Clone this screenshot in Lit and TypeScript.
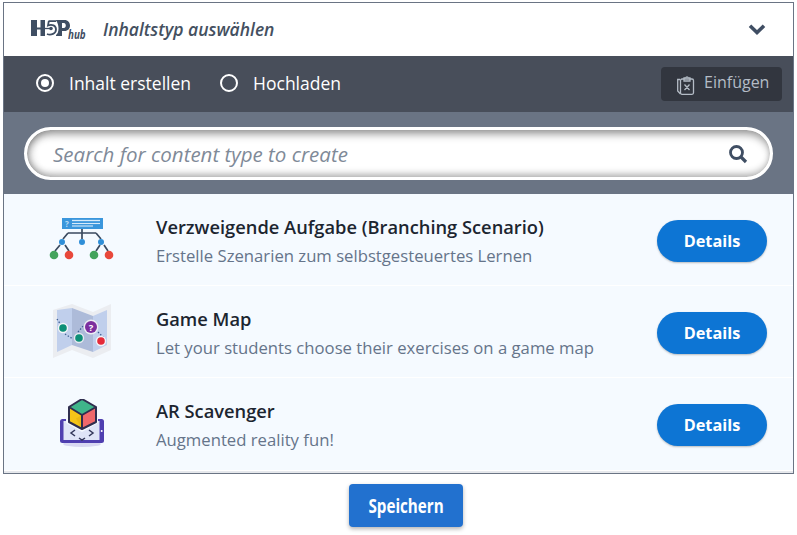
import { LitElement, html, css } from "lit";
import { customElement } from "lit/decorators.js";

const logo = html`<svg class="logo" width="44" height="18" viewBox="31 19 44 18" aria-hidden="true">
  <path fill="#3f4e63" d="M31 20h6v7.500h3.500V20H45v16h-4.500v-6.500H37V36h-6z"/>
  <path d="M44 28.500h6" stroke="#3f4e63" stroke-width="1.300"/>
  <circle cx="51" cy="28.500" r="1.800" fill="#3f4e63"/>
  <path fill="none" stroke="#3f4e63" stroke-width="1.800" d="M48.500 21.200h7.500M48.800 21.200l-.8 4.300c4-1.500 8 0 8 4s-5 6.200-9 4.500"/>
  <path fill="#3f4e63" fill-rule="evenodd" d="M56 20h8.500c3.500 0 5.500 2.500 5.500 5.500s-2 5.500-5.500 5.500H62v5h-6v-1c1.500-1 2.500-3 2.500-6.500 0-3.500-1-6-2.500-8zm6 3v5h2c1 0 1.800-1 1.800-2.500s-.8-2.500-1.800-2.500z"/>
</svg>`;

const branching = html`<svg class="ic" width="72" height="50" viewBox="44 216 72 50" aria-hidden="true">
  <rect x="62" y="218" width="41" height="11" fill="#3a96dc"/>
  <text x="65" y="227" font-size="8" font-family="Open Sans" font-weight="700" fill="#bcdcf5">?</text>
  <path d="M72 220.500h28" stroke="#d8ebfa" stroke-width="1.300"/>
  <path d="M72 223.500h28" stroke="#d8ebfa" stroke-width="1.100"/>
  <path d="M72 226h21" stroke="#d8ebfa" stroke-width="1.100"/>
  <path d="M82 229v10M68 233h28M68 233l-5 6M96 233l5 6M60 245l-5 6M65 245l4 6M100 245l-4 6M104 245l4 6" stroke="#3b4a5f" stroke-width="1.700" fill="none"/>
  <circle cx="62" cy="242" r="3" fill="#2f8fd8"/><circle cx="82" cy="242" r="3" fill="#2f8fd8"/><circle cx="101" cy="242" r="3" fill="#2f8fd8"/>
  <circle cx="54" cy="255" r="4.300" fill="#43a35c"/><circle cx="69" cy="255" r="4.300" fill="#e8483b"/>
  <circle cx="94" cy="255" r="4.300" fill="#43a35c"/><circle cx="109" cy="255" r="4.300" fill="#e8483b"/>
</svg>`;

const gameMap = html`<svg class="ic" width="72" height="60" viewBox="44 303 72 60" aria-hidden="true">
  <path d="M53 310L72 304L93 312L111 304V350L93 358L72 350L53 358Z" fill="#ebedf1"/>
  <path d="M57 310L72 308V345L57 352Z" fill="#c0cfec"/>
  <path d="M72 308L93 316V352L72 345Z" fill="#adbbd9"/>
  <path d="M93 316L107 310V345L93 352Z" fill="#c0cfec"/>
  <path d="M57 319L63 328M65 334L73 339M78 332L84 325M98 332L105 339" stroke="#3d5f92" stroke-width="1.300" stroke-dasharray="1.400 1.800" fill="none"/>
  <circle cx="63" cy="328" r="5.200" fill="#f4f5f8"/><circle cx="63" cy="328" r="3.800" fill="#0d8f77"/>
  <circle cx="79" cy="338" r="5.200" fill="#e4e8f0"/><circle cx="79" cy="338" r="3.800" fill="#0d8f77"/>
  <circle cx="91" cy="327" r="7.400" fill="#eceef3"/><circle cx="91" cy="327" r="6" fill="#7c2f9e"/>
  <text x="91" y="330.500" text-anchor="middle" font-size="9.500" font-family="Open Sans" font-weight="700" fill="#fff">?</text>
  <circle cx="101" cy="341" r="5.200" fill="#f4f5f8"/><circle cx="101" cy="341" r="3.800" fill="#e52b3a"/>
</svg>`;

const arIcon = html`<svg class="ic" width="60" height="52" viewBox="50 399 60 52" aria-hidden="true">
  <ellipse cx="82" cy="444" rx="19" ry="3" fill="#d8d8f2"/>
  <rect x="60" y="419" width="44" height="24" rx="2.500" fill="#4f3fb0"/>
  <rect x="63.500" y="421" width="36" height="19" fill="#dfe4f7"/>
  <circle cx="101.700" cy="431" r="1" fill="#fff"/>
  <path d="M75 430l-4 3 4 3M89 430l4 3-4 3M79 438l3 2 3-2" fill="none" stroke="#33375a" stroke-width="1.500"/>
  <path d="M82 397L98 406V423L82 432L66 423V406Z" fill="#f5f9ff"/>
  <path d="M82 399L96 407L82 415L69 407Z" fill="#3fb58a"/>
  <path d="M69 407L82 415V429L69 422Z" fill="#f5c518"/>
  <path d="M96 407V422L82 429V415Z" fill="#f0686b"/>
  <path d="M76 418.500L82 415V429Z" fill="#e5b010" opacity=".6"/>
  <path d="M82 399L96 407V422L82 429L69 422V407ZM69 407L82 415L96 407M82 415V429" fill="none" stroke="#2f2e4f" stroke-width="2" stroke-linejoin="round"/>
</svg>`;

const items = [
  { icon: branching, title: "Verzweigende Aufgabe (Branching Scenario)", desc: "Erstelle Szenarien zum selbstgesteuertes Lernen" },
  { icon: gameMap, title: "Game Map", desc: "Let your students choose their exercises on a game map" },
  { icon: arIcon, title: "AR Scavenger", desc: "Augmented reality fun!" },
];

@customElement("app-root")
export class AppRoot extends LitElement {
  static styles = css`
    :host { display: block; box-sizing: border-box; width: 797px; height: 535px; padding: 2px 3px 0; background: #fff; overflow: hidden; font-family: "Open Sans", "Noto Sans", sans-serif; }
    .panel { box-sizing: border-box; width: 791px; height: 472px; border: 1px solid #6a7484; display: flex; flex-direction: column; background: #f5faff; }
    .head { height: 53px; flex: none; background: #fff; display: flex; align-items: center; padding: 0 27px; }
    .logo { flex: none; margin-bottom: 3px; }
    .hub { font-size: 11.500px; font-style: italic; font-weight: 700; color: #3f4e63; width: 35px; margin: 10px 0 0 -7px; transform: scaleX(.85); transform-origin: left; }
    .title { font-size: 17.500px; font-style: italic; font-weight: 600; color: #44505f; flex: 1; margin-top: -2px; }
    .chev { margin-top: -1px; }
    .bar { height: 56px; flex: none; background: #484e5a; display: flex; align-items: center; padding: 0 11px 0 32px; color: #fff; font-size: 17.500px; }
    .radio { width: 18px; height: 18px; box-sizing: border-box; border: 2px solid #fff; border-radius: 50%; display: flex; align-items: center; justify-content: center; flex: none; margin: -2px 15px 0 0; }
    .radio i { width: 8px; height: 8px; border-radius: 50%; background: #fff; }
    .lab { margin-right: 29px; }
    .bar > span:not(.radio) { margin-top: -2px; }
    .paste { margin-left: auto; width: 121px; height: 34px; box-sizing: border-box; background: #32363f; border-radius: 4px; display: flex; align-items: center; gap: 9px; padding: 0 0 0 15px; color: #b4bcc6; font-size: 16px; }
    .paste span { margin-top: -5px; }
    .paste svg { margin-top: 2px; }
    .searchwrap { height: 82px; flex: none; background: #6a7484; padding: 15px 20px 0; box-sizing: border-box; }
    .search { height: 53px; box-sizing: border-box; border: 3.500px solid #fff; border-radius: 27px; background: #fff; box-shadow: inset 0 7px 8px -3px rgba(0,0,0,.42), inset 0 -6px 7px -3px rgba(0,0,0,.3), inset 8px 0 8px -5px rgba(0,0,0,.22); display: flex; align-items: center; justify-content: space-between; padding: 0 22px 0 26px; font-size: 20.500px; font-style: italic; color: #7f8a98; }
    .rows { flex: 1; display: flex; flex-direction: column; background: #fff; border-bottom: 2px solid #e6e8ec; }
    .row { height: 92px; flex: none; background: #f5faff; box-shadow: inset 0 -1px #fff; display: flex; align-items: center; box-sizing: border-box; padding: 2px 26px 0 0; }
    .row:last-child { box-shadow: none; }
    .iconbox { width: 152px; flex: none; display: flex; justify-content: center; box-sizing: border-box; }
    .ic { display: block; }
    .txt { flex: 1; display: flex; flex-direction: column; gap: 6px; }
    .t { font-size: 18.300px; font-weight: 600; color: #1c2530; line-height: 24px; }
    .d { font-size: 16.700px; color: #65748a; line-height: 22px; }
    .details { width: 110px; height: 42px; border-radius: 21px; background: #0d75d4; color: #fff; font-weight: 700; font-size: 16.300px; display: flex; align-items: center; justify-content: center; box-shadow: 0 1px 2px rgba(0,0,0,.25); }
    .foot { display: flex; padding: 10px 0 0 346px; }
    .save { width: 114px; height: 43px; background: #2271cf; border-radius: 4px; color: #fff; display: flex; align-items: center; justify-content: center; box-shadow: 0 2px 4px rgba(0,0,0,.3); font-size: 19px; font-weight: 700; }
    .save span { display: inline-block; transform: scaleX(.8); }
  `;

  render() {
    return html`
      <div class="panel">
        <div class="head">
          ${logo}<span class="hub">hub</span>
          <span class="title">Inhaltstyp auswählen</span>
          <svg class="chev" width="18" height="12" viewBox="0 0 18 12" aria-hidden="true"><path d="M2 2.800L9 9.500l7-6.700" fill="none" stroke="#3f4e63" stroke-width="3.600"/></svg>
        </div>
        <div class="bar">
          <span class="radio"><i></i></span><span class="lab">Inhalt erstellen</span>
          <span class="radio"></span><span>Hochladen</span>
          <div class="paste">
            <svg width="19" height="20" viewBox="0 0 19 20" fill="none" stroke="#b4bcc6" stroke-width="1.300" aria-hidden="true">
              <path d="M4 4.500H1.700v11.500L4.500 19"/><rect x="4.500" y="4" width="13" height="15.300" rx="1.500"/><path d="M8 4V2.800h2a1 1 0 0 1 2 0h2V6H8zM8.500 9.500l5 5.500M13.500 9.500l-5 5.500"/>
            </svg>
            <span>Einfügen</span>
          </div>
        </div>
        <div class="searchwrap">
          <div class="search">
            <span>Search for content type to create</span>
            <svg width="20" height="20" viewBox="0 0 20 20" fill="none" stroke="#3f4e63" aria-hidden="true"><circle cx="8.500" cy="8.500" r="6" stroke-width="2.800"/><path d="M13 13l5 5" stroke-width="3.200"/></svg>
          </div>
        </div>
        <div class="rows">
          ${items.map(i => html`
            <div class="row">
              <div class="iconbox">${i.icon}</div>
              <div class="txt"><div class="t">${i.title}</div><div class="d">${i.desc}</div></div>
              <div class="details">Details</div>
            </div>`)}
        </div>
      </div>
      <div class="foot"><div class="save"><span>Speichern</span></div></div>
    `;
  }
}
